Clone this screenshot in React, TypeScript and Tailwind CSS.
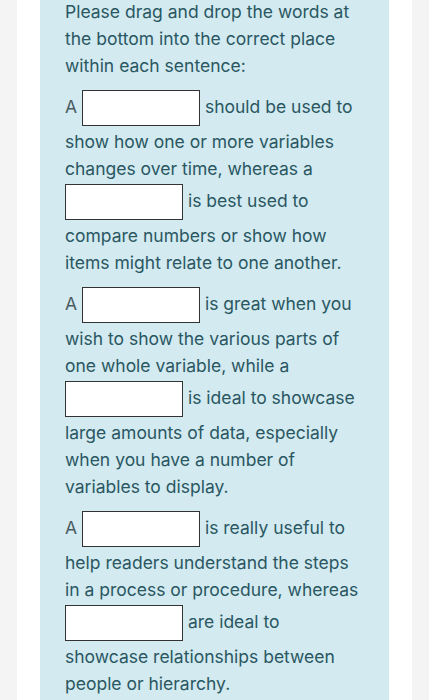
import React from 'react'

function Blank() {
  return (
    <span className="inline-block w-[118px] h-[36px] my-[2px] align-middle border border-[#333] bg-white" />
  )
}

export default function App() {
  return (
    <div className="min-h-[700px] bg-[#f4f4f4] px-[17px] font-['Inter','Liberation_Sans',Arial,sans-serif]">
      <div className="bg-white px-[23px] min-h-[700px]">
        <div className="bg-[#d2eaf0] px-[25px] pb-4 min-h-[700px] text-[17.5px] leading-[27px] text-[#2a5762] whitespace-nowrap">
          <p className="-mt-[2px]">
            Please drag and drop the words at
            <br />
            the bottom into the correct place
            <br />
            within each sentence:
          </p>

          <p className="mt-[9px]">
            <span className="text-[#4a5c61]">A</span> <Blank /> should be used to
            <br />
            show how one or more variables
            <br />
            changes over time, whereas a
            <br />
            <Blank /> is best used to
            <br />
            compare numbers or show how
            <br />
            items might relate to one another.
          </p>

          <p className="mt-[9px]">
            <span className="text-[#4a5c61]">A</span> <Blank /> is great when you
            <br />
            wish to show the various parts of
            <br />
            one whole variable, while a
            <br />
            <Blank /> is ideal to showcase
            <br />
            large amounts of data, especially
            <br />
            when you have a number of
            <br />
            variables to display.
          </p>

          <p className="mt-[9px]">
            <span className="text-[#4a5c61]">A</span> <Blank /> is really useful to
            <br />
            help readers understand the steps
            <br />
            in a process or procedure, whereas
            <br />
            <Blank /> are ideal to
            <br />
            showcase relationships between
            <br />
            people or hierarchy.
          </p>
        </div>
      </div>
    </div>
  )
}
